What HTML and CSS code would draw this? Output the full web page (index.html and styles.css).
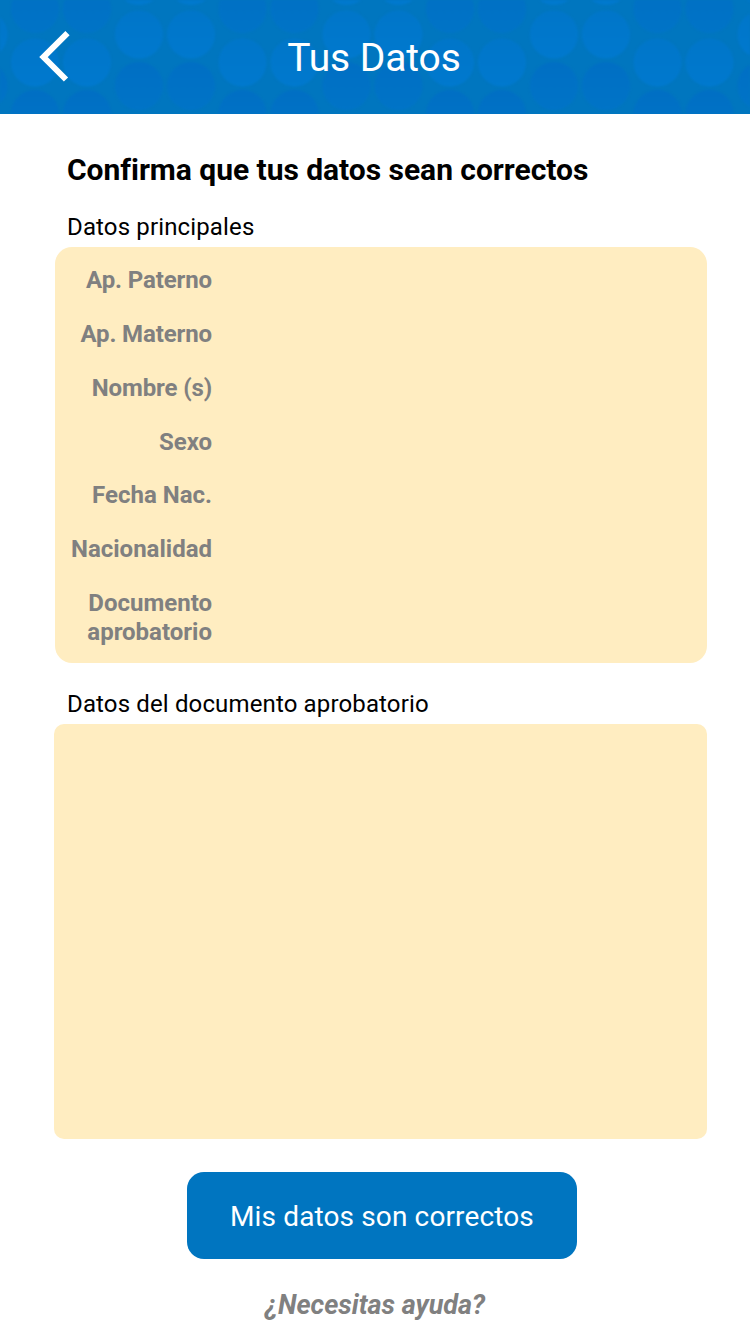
FILE: index.html
```
<!DOCTYPE html>
<html lang="es">
<head>
<meta charset="utf-8">
<title>Tus Datos</title>
<link rel="stylesheet" href="styles.css">
</head>
<body>
<header class="topbar">
  <svg class="pattern" width="750" height="114" aria-hidden="true">
    <defs>
      <linearGradient id="dark" x1="0" y1="0" x2="0" y2="1"><stop offset="0" stop-color="#006fc4"/><stop offset="1" stop-color="#0074c7"/></linearGradient>
      <linearGradient id="light" x1="0" y1="0" x2="0" y2="1"><stop offset="0" stop-color="#0076c9"/><stop offset="1" stop-color="#0079ce"/></linearGradient>
      <pattern id="dots" x="9" y="0" width="207.5" height="114" patternUnits="userSpaceOnUse">
        <g fill="url(#dark)">
          <circle cx="26" cy="9" r="24"/><circle cx="78" cy="9" r="24"/>
          <circle cx="130" cy="86" r="24"/><circle cx="182" cy="86" r="24"/>
          <circle cx="26" cy="114" r="24"/><circle cx="78" cy="114" r="24"/>
        </g>
        <g fill="url(#light)">
          <circle cx="26" cy="62.500" r="24"/><circle cx="78" cy="62.500" r="24"/>
          <circle cx="130" cy="34.500" r="24"/><circle cx="182" cy="34.500" r="24"/>
          <circle cx="130" cy="-19" r="24"/><circle cx="182" cy="-19" r="24"/>
        </g>
      </pattern>
    </defs>
    <rect width="750" height="114" fill="url(#dots)"/>
  </svg>
  <a class="back" href="#" aria-label="Regresar">
    <svg width="32" height="52" viewBox="0 0 32 52"><path d="M28.500 2.200 4.500 26 27 48.500" fill="none" stroke="#fff" stroke-width="6"/></svg>
  </a>
  <h1 class="title"><span>Tus Datos</span></h1>
</header>
<main class="content">
  <h2 class="heading"><span>Confirma que tus datos sean correctos</span></h2>
  <h3 class="section-title"><span>Datos principales</span></h3>
  <dl class="panel panel-main">
    <dt>Ap. Paterno</dt>
    <dt>Ap. Materno</dt>
    <dt>Nombre (s)</dt>
    <dt>Sexo</dt>
    <dt>Fecha Nac.</dt>
    <dt>Nacionalidad</dt>
    <dt>Documento aprobatorio</dt>
  </dl>
  <h3 class="section-title section-document"><span>Datos del documento aprobatorio</span></h3>
  <div class="panel panel-document"></div>
  <button class="confirm" type="button">Mis datos son correctos</button>
  <a class="help" href="#">¿Necesitas ayuda?</a>
</main>
</body>
</html>
```
FILE: styles.css
```
* { box-sizing: border-box; }
body {
  margin: 0;
  width: 750px;
  height: 1334px;
  overflow: hidden;
  background: #fff;
  color: #000;
  font-family: Roboto, sans-serif;
}
h1, h2, h3, dl { margin: 0; font-weight: 400; }
.topbar {
  position: relative;
  display: grid;
  grid-template-columns: 100px 1fr 100px;
  align-items: center;
  height: 114px;
  overflow: hidden;
  background: #0076bf;
}
.pattern { position: absolute; inset: 0; filter: blur(1px); }
.back, .title { position: relative; }
.back { justify-self: start; margin-left: 39px; height: 52px; }
.back svg { display: block; }
.title { padding: 2px 2px 0 0; text-align: center; color: #fff; font-size: 39px; line-height: 46px; letter-spacing: -0.1px; }
.content {
  display: flex;
  flex-direction: column;
  padding: 38px 43px 0 54px;
}
.heading { padding-left: 13px; font-size: 30px; line-height: 36px; font-weight: 700; letter-spacing: -0.03px; }
.section-title { margin-top: 24px; padding-left: 13px; font-size: 24px; line-height: 30px; letter-spacing: 0.14px; }
.panel { background: #ffedc1; }
.panel-main {
  display: flex;
  flex-direction: column;
  gap: 24.800px;
  height: 416px;
  margin: 5px 0 0 1px;
  padding: 19.200px 0 0;
  border-radius: 17px;
  color: #808080;
  font-size: 24px;
  line-height: 29px;
  font-weight: 700;
}
.panel-main dt { width: 157px; padding-left: 12px; text-align: right; }
.panel-main dt:nth-child(-n+3) { letter-spacing: -0.12px; }
.section-document { margin-top: 26px; }
.panel-document { height: 415px; margin-top: 5px; border-radius: 10px; }
.confirm {
  width: 390px;
  height: 87px;
  margin: 33px 0 0 133px;
  padding: 2px 0 0;
  border: 0;
  border-radius: 17px;
  background: #0075c0;
  color: #fff;
  font: 400 28px/34px Roboto, sans-serif;
  letter-spacing: 0.13px;
}
.help {
  align-self: center;
  margin: 30px 11px 0 0;
  color: #808080;
  font-size: 27px;
  line-height: 32px;
  font-style: italic;
  font-weight: 700;
  text-decoration: none;
}
```
